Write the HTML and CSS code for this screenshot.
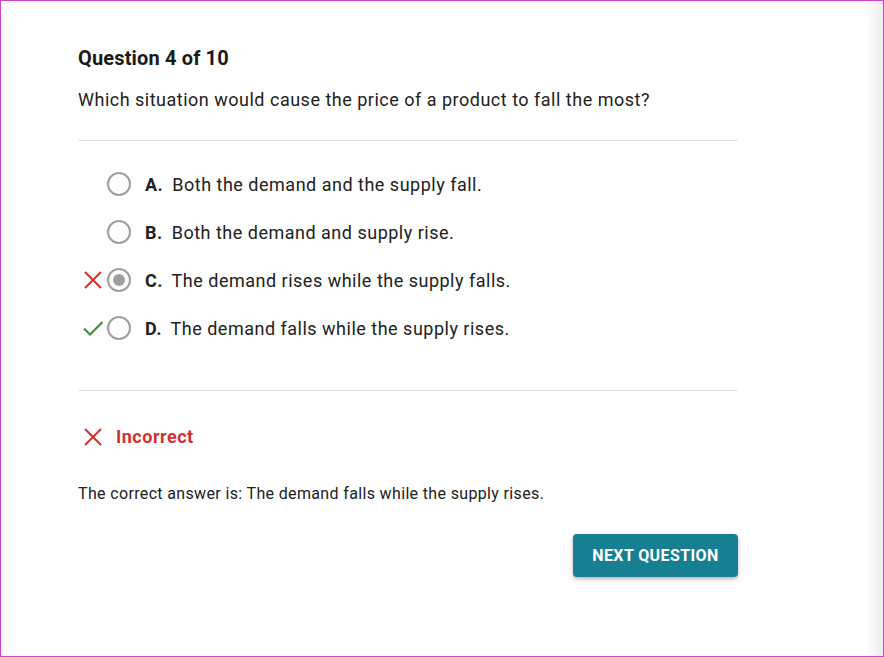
FILE: index.html
```html
<!DOCTYPE html>
<html>
<head>
<meta charset="utf-8">
<link rel="stylesheet" href="styles.css">
</head>
<body>
<div class="frame">
  <main class="quiz">
    <h1 class="title">Question 4 of 10</h1>
    <p class="prompt">Which situation would cause the price of a product to fall the most?</p>
    <hr class="divider">
    <ul class="options">
      <li class="option">
        <span class="mark"></span>
        <span class="radio"></span>
        <span class="label"><b>A.</b> Both the demand and the supply fall.</span>
      </li>
      <li class="option">
        <span class="mark"></span>
        <span class="radio"></span>
        <span class="label"><b>B.</b> Both the demand and supply rise.</span>
      </li>
      <li class="option">
        <span class="mark">
          <svg width="20" height="20" viewBox="0 0 20 20"><path d="M2 2 L18 18 M18 2 L2 18" stroke="#d32f2f" stroke-width="2" fill="none"/></svg>
        </span>
        <span class="radio checked"></span>
        <span class="label"><b>C.</b> The demand rises while the supply falls.</span>
      </li>
      <li class="option">
        <span class="mark">
          <svg width="20" height="20" viewBox="0 0 20 20"><path d="M1 10.5 L7 16.5 L19.5 4" stroke="#388e3c" stroke-width="2" fill="none"/></svg>
        </span>
        <span class="radio"></span>
        <span class="label"><b>D.</b> The demand falls while the supply rises.</span>
      </li>
    </ul>
    <hr class="divider divider-bottom">
    <div class="result">
      <svg class="result-icon" width="20" height="20" viewBox="0 0 20 20"><path d="M2 2 L18 18 M18 2 L2 18" stroke="#d32f2f" stroke-width="2" fill="none"/></svg>
      <span class="result-text">Incorrect</span>
    </div>
    <p class="answer">The correct answer is: The demand falls while the supply rises.</p>
    <div class="actions">
      <button class="next">NEXT QUESTION</button>
    </div>
  </main>
  <div class="edge"></div>
</div>
</body>
</html>
```
FILE: styles.css
```css
html, body {
  margin: 0;
  padding: 0;
  background: #fff;
}
body {
  font-family: Roboto, "Liberation Sans", sans-serif;
  color: #212121;
}
.frame {
  box-sizing: border-box;
  width: 884px;
  height: 657px;
  border: 1px solid #cc44cc;
  display: flex;
  overflow: hidden;
}
.quiz {
  margin-left: 77px;
  width: 660px;
  padding-top: 43px;
}
.edge {
  margin-left: auto;
  width: 18px;
  background: linear-gradient(to right, #ffffff, #ececec);
}
.title {
  margin: 0;
  font-size: 20px;
  font-weight: 700;
  line-height: 28px;
  letter-spacing: 0.15px;
  color: #1a1a1a;
}
.prompt {
  margin: 16px 0 0;
  font-size: 18px;
  line-height: 24px;
  letter-spacing: 0.5px;
  color: #212121;
}
.divider {
  margin: 28px 0 0;
  border: 0;
  height: 1px;
  background: #e0e0e0;
}
.divider-bottom {
  margin-top: 38px;
}
.options {
  list-style: none;
  margin: 0;
  padding: 19px 0 0;
}
.option {
  display: flex;
  align-items: center;
  height: 48px;
}
.mark {
  box-sizing: border-box;
  width: 29px;
  padding-left: 5px;
  display: flex;
}
.mark svg { display: block; }
.radio {
  box-sizing: border-box;
  width: 24px;
  height: 24px;
  border: 2px solid #9e9e9e;
  border-radius: 50%;
  display: flex;
  align-items: center;
  justify-content: center;
}
.radio.checked::after {
  content: "";
  width: 12px;
  height: 12px;
  border-radius: 50%;
  background: #9e9e9e;
}
.label {
  margin-left: 14px;
  font-size: 18px;
  letter-spacing: 0.5px;
  color: #212121;
}
.label b {
  font-weight: 700;
  margin-right: 4px;
}
.result {
  display: flex;
  align-items: center;
  margin-top: 35px;
  padding-left: 5px;
}
.result-icon { display: block; }
.result-text {
  margin-left: 13px;
  font-size: 18px;
  font-weight: 700;
  letter-spacing: 0.5px;
  color: #d32f2f;
}
.answer {
  margin: 37px 0 0;
  font-size: 16px;
  line-height: 20px;
  letter-spacing: 0.35px;
  color: #212121;
}
.actions {
  display: flex;
  justify-content: flex-end;
  margin-top: 30px;
}
.next {
  width: 165px;
  height: 43px;
  border: 0;
  border-radius: 4px;
  background: #167f91;
  color: #fff;
  font-family: Roboto, "Liberation Sans", sans-serif;
  font-size: 16px;
  font-weight: 700;
  letter-spacing: 0.4px;
  box-shadow: 0 2px 4px rgba(0,0,0,0.3);
}
```
